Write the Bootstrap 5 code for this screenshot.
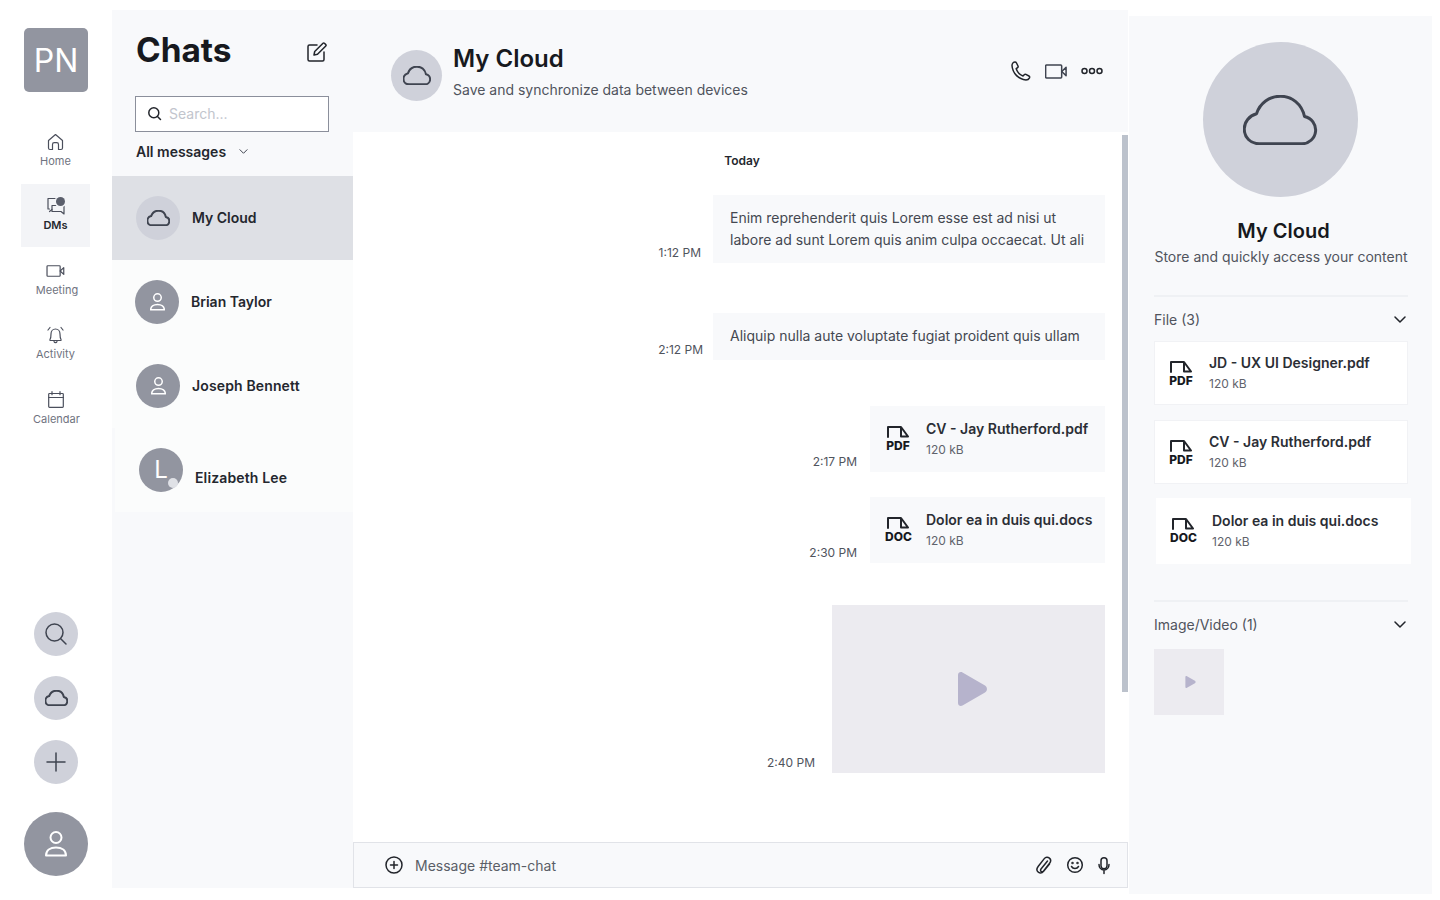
<!DOCTYPE html>
<html lang="en">
<head>
  <meta charset="UTF-8" />
  <title>My Cloud | Chats</title>
  <link href="https://cdn.jsdelivr.net/npm/bootstrap@5.3.0/dist/css/bootstrap.min.css" rel="stylesheet"/>
  <script src="https://cdn.jsdelivr.net/npm/bootstrap@5.3.3/dist/js/bootstrap.bundle.min.js"></script>
  <style>
    html, body { height: 900px; overflow: hidden; }
    body { font-family: Inter, "Liberation Sans", sans-serif; background: #fff; color: #24272e; font-size: 14px; }
    svg { display: block; overflow: visible; }
    .ico { fill: none; stroke: #3f4450; stroke-width: 1.5; stroke-linecap: round; stroke-linejoin: round; }
    .ico-dark { stroke: #22252b; }
    .ico-white { stroke: #fff; }
    .ico-thin { stroke-width: 1; }
    .ico-2 { stroke-width: 2; }
    .ico-3 { stroke-width: 3; }
    .circ { border-radius: 50%; background: #cfd1da; flex: none; }
    .circ-grey { background: #9295a0; }
    .sz44 { width: 44px; height: 44px; }
    .sz64 { width: 64px; height: 64px; }

    /* left rail */
    .rail { width: 112px; height: 900px; flex: none; padding-top: 28px; }
    .rail-logo { width: 64px; height: 64px; margin: 0 0 40px 24px; background: #9295a0; border-radius: 5px; color: #fff; font-size: 32px; line-height: 66px; text-align: center; }
    .rail-item { width: 69px; margin-left: 21px; height: 64px; text-align: center; font-size: 11px; color: #6f7380; line-height: 14px; position: relative; }
    .rail-item .ico { stroke-width: 1.2; stroke: #4b4f5c; }
    .rail-item svg { margin: 0 auto; }
    .rail-home { height: 52px; padding-top: 1px; }
    .rail-home svg { margin-bottom: 3px; }
    .rail-active { background: #f3f4f7; color: #24272e; font-weight: 600; height: 63px; padding-top: 13px; }
    .rail-active svg { margin-bottom: 3px; }
    .rail-meet { padding-top: 18px; }
    .rail-meet svg { margin-bottom: 6px; }
    .rail-bell { padding-top: 15px; }
    .rail-bell svg { margin-bottom: 3px; }
    .rail-cal { padding-top: 16px; }
    .rail-cal svg { margin-bottom: 4px; }
    .meet-label { padding-left: 3px; }
    .cal-label { padding-left: 2px; }
    .dm-dot { position: absolute; width: 9px; height: 9px; border-radius: 50%; background: #5b5f6c; box-shadow: 0 0 0 1.5px #f3f4f7; top: 13px; left: 35px; }
    .rail-btn { margin-left: 34px; margin-bottom: 20px; }
    .me-avatar { margin: 8px 0 24px 24px; }

    /* chat list */
    .chats { width: 241px; height: 878px; flex: none; margin-top: 10px; background: #f8f9fb; }
    .chats-title { font-size: 33.4px; font-weight: 700; color: #17191e; line-height: 40px; padding: 20px 0 0 24px; height: 86px; }
    .edit-ico { margin: 12px 26px 0 0; }
    .search-box { width: 194px; height: 36px; margin-left: 23px; background: #fff; border: 1px solid #8b8f9b; color: #c2c5cd; padding: 0 0 1px 12px; gap: 8px; }
    .filter-line { height: 44px; margin-left: 24px; font-weight: 600; gap: 13px; padding-bottom: 6px; }
    .chat-row { height: 84px; background: #fbfcfc; font-weight: 600; gap: 12px; padding-left: 23px; }
    .chat-row-on { background: #dee0e5; padding-left: 24px; }
    .chat-row-shift { padding-left: 24px; }
    .chat-row-last { margin-left: 3px; padding-left: 24px; }
    .row-name { margin-bottom: 2px; }
    .row-name-low { margin-top: 14px; }
    .row-wide { letter-spacing: .14px; }
    .status-dot { position: absolute; width: 10px; height: 10px; border-radius: 50%; background: #dfe1e6; right: 5px; bottom: 4px; }
    .letter { color: #fff; font-size: 24px; font-weight: 400; line-height: 44px; text-align: center; position: relative; }

    /* main column */
    .main-col { width: 775px; height: 878px; flex: none; margin-top: 10px; margin-right: 1px; }
    .chat-head { height: 122px; background: #f8f9fb; padding: 0 25px 0 38px; }
    .head-left { gap: 11px; }
    .head-av { width: 51px; height: 51px; margin-top: 40px; }
    .head-text { margin-top: 34px; }
    .head-title { font-size: 24px; font-weight: 600; color: #17191e; line-height: 30px; }
    .head-sub { color: #50545d; line-height: 20px; margin-top: 6px; }
    .head-tools { gap: 14px; }
    .chat-body { height: 710px; position: relative; padding-right: 23px; }
    .scroll-thumb { position: absolute; right: 0; top: 3px; width: 6px; height: 557px; background: #bcc2cc; }
    .today { font-size: 12px; font-weight: 600; text-align: center; line-height: 16px; padding-top: 21px; height: 63px; margin-right: -26px; }
    .time { font-size: 12px; color: #50545d; line-height: 16px; white-space: nowrap; margin-bottom: 2px; }
    .bubble { background: #f8f9fb; color: #444851; padding: 12px 17px; line-height: 22px; width: 392px; }
    .file-bubble { background: #f8f9fb; width: 235px; height: 66px; padding: 13px 0 0 15px; gap: 15px; }
    .file-name { font-weight: 600; line-height: 20px; white-space: nowrap; color: #2b2e35; }
    .file-size { font-size: 12px; color: #5f636c; line-height: 16px; margin-top: 3px; }
    .file-ico { width: 26px; flex: none; text-align: center; font-size: 12px; font-weight: 800; line-height: 12px; color: #17191e; padding-top: 7px; }
    .file-ico svg { margin: 0 auto 2px; }
    .video-box { width: 273px; height: 168px; background: #ecebf0; padding-left: 8px; }
    .composer { height: 46px; background: #f8f9fb; border: 1px solid #e1e3e8; color: #5a5e67; padding: 0 17px 0 31px; }
    .plus-ico { margin-right: 12px; }
    .composer-tools { gap: 15px; }
    .msg-a { height: 68px; margin-bottom: 50px; }
    .msg-a .time { margin-right: 4px; }
    .msg-b { height: 47px; margin-bottom: 46px; }
    .msg-b .time { margin-right: 2px; }
    .msg-b .bubble { height: 47px; }
    .msg-c { height: 66px; margin-bottom: 25px; }
    .msg-c .time, .msg-d .time { margin-right: 13px; }
    .msg-d { height: 66px; margin-bottom: 42px; }
    .msg-e .time { margin-right: 17px; }

    /* right panel */
    .info-panel { width: 303px; height: 878px; flex: none; margin-top: 16px; background: #f8f9fb; padding: 26px 24px 0 25px; }
    .info-hero { width: 155px; height: 155px; margin-left: 49px; }
    .info-title { font-size: 20px; font-weight: 600; color: #17191e; line-height: 26px; text-align: center; margin-top: 21px; padding-left: 5px; }
    .info-sub { color: #50545d; line-height: 20px; text-align: center; margin-top: 3px; white-space: nowrap; }
    .info-rule { height: 2px; background: #eff1f4; }
    .rule-top { margin-top: 28px; }
    .rule-mid { margin-top: 36px; }
    .sect-line { color: #50545d; height: 44px; padding-right: 2px; }
    .info-file { background: #fff; border: 1px solid #f1f2f5; width: 254px; height: 64px; margin-bottom: 15px; padding: 11px 0 0 13px; gap: 15px; }
    .info-file .file-ico { padding-top: 8px; }
    .info-file-alt { width: 255px; height: 66px; margin: -1px 0 0 2px; border: 0; padding: 13px 0 0 14px; gap: 16px; }
    .info-file-alt .file-ico { padding-top: 7px; }
    .thumb-box { width: 70px; height: 66px; margin-top: 3px; background: #ecebf0; padding-left: 2px; }
  </style>
</head>
<body>
  <svg width="0" height="0" class="position-absolute">
    <symbol id="i-cloud" viewBox="0 0 30 20"><path vector-effect="non-scaling-stroke" d="M6.5 19.5H23.5a5.5 5.5 0 0 0 1.1-10.9C23.5 3.5 19.5.5 15 .5 10.500.5 6.800 3.300 5.400 7.500 2.500 8.300.5 10.800.5 13.500.5 17 3 19.500 6.500 19.500Z"/></symbol>
    <symbol id="i-user" viewBox="0 0 22 26"><circle vector-effect="non-scaling-stroke" cx="11" cy="6.500" r="5.500"/><path vector-effect="non-scaling-stroke" d="M1 24.500c0-5 4.200-8 10-8s10 3 10 8Z"/></symbol>
    <symbol id="i-file" viewBox="0 0 22 12"><path vector-effect="non-scaling-stroke" d="M1 11V1H14l7 9.500H14V2"/></symbol>
    <symbol id="i-video" viewBox="0 0 24 16"><rect vector-effect="non-scaling-stroke" x=".7" y="1" width="17.500" height="14" rx="1"/><path vector-effect="non-scaling-stroke" d="M18.200 8 23 3.500v9Z"/></symbol>
    <symbol id="i-chev" viewBox="0 0 12 7"><path vector-effect="non-scaling-stroke" d="M1 1l5 5 5-5"/></symbol>
    <symbol id="i-play" viewBox="0 0 29 34"><path d="M0 3C0 .5 2.500-.7 4.500.5l22.500 13c2.600 1.500 2.600 5.500 0 7L4.500 33.500C2.500 34.700 0 33.500 0 31Z"/></symbol>
  </svg>

  <div class="d-flex">
    <!-- left rail -->
    <nav class="rail d-flex flex-column">
      <div class="rail-logo">PN</div>
      <div class="rail-item rail-home">
        <svg class="ico" width="17" height="18" viewBox="0 0 17 18"><path d="M1.500 7.500 8.500 1.500 15.500 7.500V15c0 .8-.7 1.500-1.500 1.500H11.500V11.500c0-1-.8-1.800-1.800-1.800H7.300c-1 0-1.800.8-1.800 1.800V16.500H3C2.200 16.500 1.500 15.800 1.500 15Z"/></svg>
        Home
      </div>
      <div class="rail-item rail-active">
        <svg class="ico" width="18" height="18" viewBox="0 0 18 18"><path d="M12 1.500H1v10.500h1.500M5 8.500h12v8.500l-3-2.500H5Z"/><path d="M2.500 14.500 5 12.500"/></svg>
        <span class="dm-dot"></span>
        DMs
      </div>
      <div class="rail-item rail-meet">
        <svg class="ico" width="19" height="12"><use href="#i-video"/></svg>
        <span class="d-block meet-label">Meeting</span>
      </div>
      <div class="rail-item rail-bell">
        <svg class="ico" width="17" height="18" viewBox="0 0 17 18"><path d="M3 13.500c1-1.500 1-3 1-5.500 0-3 2-5 4.500-5S13 5 13 8c0 2.500 0 4 1 5.500.3.500 0 1-.5 1h-10c-.5 0-.8-.5-.5-1ZM7 15.500c.5 1.500 2.500 1.500 3 0M1 4 3 1.500M16 4 14 1.500"/></svg>
        Activity
      </div>
      <div class="rail-item rail-cal">
        <svg class="ico" width="16" height="17" viewBox="0 0 16 17"><rect x=".7" y="2.500" width="14.600" height="13.800" rx=".8"/><path d="M.7 6.500h14.600M4 .7v3M12 .7v3"/></svg>
        <span class="d-block cal-label">Calendar</span>
      </div>
      <div class="mt-auto"></div>
      <div class="circ sz44 rail-btn d-flex align-items-center justify-content-center">
        <svg class="ico" width="22" height="22" viewBox="0 0 22 22"><circle cx="9.500" cy="9.500" r="8.500"/><path d="M16 16l5 5"/></svg>
      </div>
      <div class="circ sz44 rail-btn d-flex align-items-center justify-content-center">
        <svg class="ico ico-2" width="23" height="16"><use href="#i-cloud"/></svg>
      </div>
      <div class="circ sz44 rail-btn d-flex align-items-center justify-content-center">
        <svg class="ico" width="20" height="20" viewBox="0 0 20 20"><path d="M10 1v18M1 10h18"/></svg>
      </div>
      <div class="circ circ-grey sz64 me-avatar d-flex align-items-center justify-content-center">
        <svg class="ico ico-white ico-2" width="22" height="26"><use href="#i-user"/></svg>
      </div>
    </nav>

    <!-- chat list -->
    <aside class="chats">
      <div class="chats-title d-flex justify-content-between">
        <span>Chats</span>
        <svg class="ico ico-dark edit-ico" width="20" height="20" viewBox="0 0 20 20"><path d="M10 3H2.500C1.700 3 1 3.700 1 4.500v13c0 .8.700 1.500 1.500 1.500h13c.8 0 1.500-.7 1.500-1.500V10"/><path d="M7 13l.7-3.500L16 1.200c.4-.4 1-.4 1.400 0l1.400 1.400c.4.400.4 1 0 1.400L10.500 12.300Z"/></svg>
      </div>
      <div class="search-box d-flex align-items-center">
        <svg class="ico ico-dark" width="13" height="13" viewBox="0 0 13 13"><circle cx="5.800" cy="5.800" r="5"/><path d="M9.500 9.500 12.500 12.500"/></svg>
        <span>Search...</span>
      </div>
      <div class="filter-line d-flex align-items-center">
        <span>All messages</span>
        <svg class="ico ico-thin" width="9" height="5"><use href="#i-chev"/></svg>
      </div>
      <div class="chat-row chat-row-on d-flex align-items-center">
        <div class="circ sz44 d-flex align-items-center justify-content-center">
          <svg class="ico ico-2" width="23" height="16"><use href="#i-cloud"/></svg>
        </div>
        <span class="row-name">My Cloud</span>
      </div>
      <div class="chat-row d-flex align-items-center">
        <div class="circ circ-grey sz44 d-flex align-items-center justify-content-center">
          <svg class="ico ico-white" width="15" height="18"><use href="#i-user"/></svg>
        </div>
        <span class="row-name">Brian Taylor</span>
      </div>
      <div class="chat-row chat-row-shift d-flex align-items-center">
        <div class="circ circ-grey sz44 d-flex align-items-center justify-content-center">
          <svg class="ico ico-white" width="15" height="18"><use href="#i-user"/></svg>
        </div>
        <span class="row-name row-wide">Joseph Bennett</span>
      </div>
      <div class="chat-row chat-row-last d-flex align-items-center">
        <div class="circ circ-grey sz44 letter">L<span class="status-dot"></span></div>
        <span class="row-name-low row-wide">Elizabeth Lee</span>
      </div>
    </aside>

    <!-- conversation -->
    <main class="main-col d-flex flex-column">
      <header class="chat-head d-flex justify-content-between">
        <div class="d-flex head-left">
          <div class="circ d-flex align-items-center justify-content-center head-av">
            <svg class="ico ico-2" width="28" height="19"><use href="#i-cloud"/></svg>
          </div>
          <div class="head-text">
            <div class="head-title">My Cloud</div>
            <div class="head-sub">Save and synchronize data between devices</div>
          </div>
        </div>
        <div class="d-flex align-items-center head-tools">
          <svg class="ico ico-dark" width="20" height="20" viewBox="0 0 20 20"><path d="M1 4.500C1 2.500 2.500 1 4 1c.7 0 1.200.4 1.500 1L7 5c.3.600.1 1.200-.4 1.600L5.200 7.700c1 3 3.500 6 6.800 7.300l1.200-1.300c.5-.5 1.100-.6 1.700-.3l3 1.600c.7.400.9 1.100.6 1.800C17.800 18.200 16.500 19 15 19 7.500 18.500 1.500 12 1 4.500Z"/></svg>
          <svg class="ico" width="22" height="15"><use href="#i-video"/></svg>
          <svg class="ico ico-dark" width="22" height="8" viewBox="0 0 22 8"><circle cx="3.500" cy="4" r="2.500"/><circle cx="11" cy="4" r="2.500"/><circle cx="18.500" cy="4" r="2.500"/></svg>
        </div>
      </header>

      <section class="chat-body">
        <div class="today">Today</div>
        <div class="d-flex justify-content-end align-items-end gap-2 msg-a">
          <span class="time">1:12 PM</span>
          <div class="bubble">Enim reprehenderit quis Lorem esse est ad nisi ut labore ad sunt Lorem quis anim culpa occaecat. Ut ali</div>
        </div>
        <div class="d-flex justify-content-end align-items-end gap-2 msg-b">
          <span class="time">2:12 PM</span>
          <div class="bubble">Aliquip nulla aute voluptate fugiat proident quis ullam</div>
        </div>
        <div class="d-flex justify-content-end align-items-end msg-c">
          <span class="time">2:17 PM</span>
          <div class="file-bubble d-flex">
            <div class="file-ico"><svg class="ico ico-dark ico-2" width="22" height="12"><use href="#i-file"/></svg>PDF</div>
            <div><div class="file-name">CV - Jay Rutherford.pdf</div><div class="file-size">120 kB</div></div>
          </div>
        </div>
        <div class="d-flex justify-content-end align-items-end msg-d">
          <span class="time">2:30 PM</span>
          <div class="file-bubble d-flex">
            <div class="file-ico"><svg class="ico ico-dark ico-2" width="22" height="12"><use href="#i-file"/></svg>DOC</div>
            <div><div class="file-name">Dolor ea in duis qui.docs</div><div class="file-size">120 kB</div></div>
          </div>
        </div>
        <div class="d-flex justify-content-end align-items-end msg-e">
          <span class="time">2:40 PM</span>
          <div class="video-box d-flex align-items-center justify-content-center">
            <svg width="29" height="34" fill="#b6b3cc"><use href="#i-play"/></svg>
          </div>
        </div>
        <div class="scroll-thumb"></div>
      </section>

      <footer class="composer d-flex align-items-center">
        <svg class="ico ico-dark plus-ico" width="18" height="18" viewBox="0 0 18 18"><circle cx="9" cy="9" r="8"/><path d="M9 5.500v7M5.500 9h7"/></svg>
        <span class="flex-grow-1">Message #team-chat</span>
        <div class="d-flex align-items-center composer-tools">
          <svg class="ico ico-dark" width="16" height="18" viewBox="0 0 16 18"><path d="M11.500 5 5 13c-.8 1-.5 2 .2 2.500s1.700.4 2.400-.5l6-7.700c1.500-2 1.200-4-.2-5.200S9.700.8 8.300 2.600L2.300 10.300C.5 12.700.7 15 2.300 16.200s3.800 1 5.500-1.200L13.500 8"/></svg>
          <svg class="ico ico-dark" width="16" height="16" viewBox="0 0 16 16"><circle cx="8" cy="8" r="7.300"/><path d="M4.500 9.500c1.500 2.500 5.500 2.500 7 0"/><circle cx="5.500" cy="6" r=".5"/><circle cx="10.500" cy="6" r=".5"/></svg>
          <svg class="ico ico-dark" width="12" height="17" viewBox="0 0 12 17"><rect x="3" y=".7" width="6" height="11" rx="3"/><path d="M1 7.500c0 3 2 5.500 5 5.500s5-2.500 5-5.500M6 13v3.500"/></svg>
        </div>
      </footer>
    </main>

    <!-- info panel -->
    <aside class="info-panel">
      <div class="circ info-hero d-flex align-items-center justify-content-center">
        <svg class="ico ico-3" width="75" height="50"><use href="#i-cloud"/></svg>
      </div>
      <div class="info-title">My Cloud</div>
      <div class="info-sub">Store and quickly access your content</div>
      <div class="info-rule rule-top"></div>
      <div class="sect-line d-flex align-items-center justify-content-between">
        <span>File (3)</span>
        <svg class="ico ico-dark" width="12" height="7"><use href="#i-chev"/></svg>
      </div>
      <div class="info-file d-flex">
        <div class="file-ico"><svg class="ico ico-dark ico-2" width="22" height="12"><use href="#i-file"/></svg>PDF</div>
        <div><div class="file-name">JD - UX UI Designer.pdf</div><div class="file-size">120 kB</div></div>
      </div>
      <div class="info-file d-flex">
        <div class="file-ico"><svg class="ico ico-dark ico-2" width="22" height="12"><use href="#i-file"/></svg>PDF</div>
        <div><div class="file-name">CV - Jay Rutherford.pdf</div><div class="file-size">120 kB</div></div>
      </div>
      <div class="info-file info-file-alt d-flex">
        <div class="file-ico"><svg class="ico ico-dark ico-2" width="22" height="12"><use href="#i-file"/></svg>DOC</div>
        <div><div class="file-name">Dolor ea in duis qui.docs</div><div class="file-size">120 kB</div></div>
      </div>
      <div class="info-rule rule-mid"></div>
      <div class="sect-line d-flex align-items-center justify-content-between">
        <span>Image/Video (1)</span>
        <svg class="ico ico-dark" width="12" height="7"><use href="#i-chev"/></svg>
      </div>
      <div class="thumb-box d-flex align-items-center justify-content-center">
        <svg width="11" height="12" fill="#b6b3cc"><use href="#i-play"/></svg>
      </div>
    </aside>
  </div>
</body>
</html>
